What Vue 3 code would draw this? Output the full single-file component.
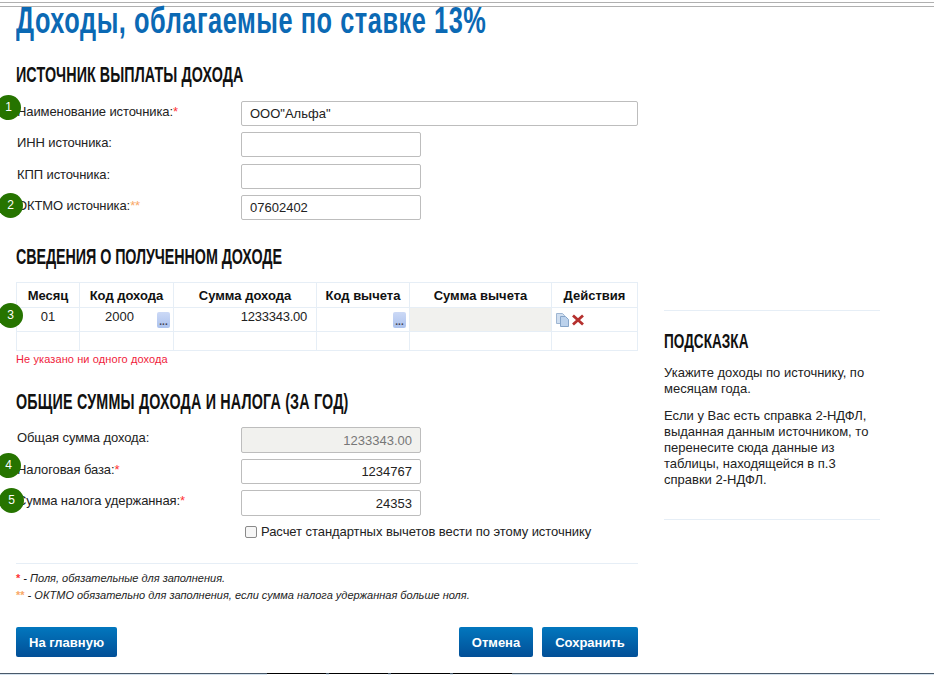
<script setup>
const sourceRows = [
  { label: 'Наименование источника:', mark: '*', value: 'ООО"Альфа"', wide: true, badge: '1', cls: 'b1', rowCls: 'r1' },
  { label: 'ИНН источника:', value: '', rowCls: 'r2' },
  { label: 'КПП источника:', value: '', rowCls: 'r3' },
  { label: 'ОКТМО источника:', mark: '**', markCls: 'orange', value: '07602402', badge: '2', cls: 'b2', rowCls: 'r4' }
]
const totals = [
  { label: 'Общая сумма дохода:', value: '1233343.00', disabled: true, rowCls: 't1' },
  { label: 'Налоговая база:', mark: '*', value: '1234767', badge: '4', cls: 'b4', rowCls: 't2' },
  { label: 'Сумма налога удержанная:', mark: '*', value: '24353', badge: '5', cls: 'b5', rowCls: 't3' }
]
</script>

<template>
  <div class="page">
    <div class="topbar"></div>
    <div class="columns">
      <main class="main">
        <h1>Доходы, облагаемые по ставке 13%</h1>

        <h2 class="first">ИСТОЧНИК ВЫПЛАТЫ ДОХОДА</h2>
        <div class="rows">
          <div v-for="r in sourceRows" :key="r.label" class="row" :class="r.rowCls">
            <span v-if="r.badge" class="badge" :class="r.cls">{{ r.badge }}</span>
            <label>{{ r.label }}<span v-if="r.mark" class="mark" :class="r.markCls">{{ r.mark }}</span></label>
            <input class="field" :class="{ wide: r.wide }" :value="r.value" />
          </div>
        </div>

        <h2 class="second">СВЕДЕНИЯ О ПОЛУЧЕННОМ ДОХОДЕ</h2>
        <div class="table-wrap">
          <span class="badge b3">3</span>
          <table>
            <colgroup>
              <col class="w1" /><col class="w2" /><col class="w3" />
              <col class="w4" /><col class="w5" /><col class="w6" />
            </colgroup>
            <thead>
              <tr><th>Месяц</th><th>Код дохода</th><th>Сумма дохода</th><th>Код вычета</th><th>Сумма вычета</th><th>Действия</th></tr>
            </thead>
            <tbody>
              <tr class="data">
                <td class="c">01</td>
                <td class="code">2000<span class="pick">...</span></td>
                <td class="r">1233343.00</td>
                <td class="code"><span class="pick">...</span></td>
                <td class="off"></td>
                <td>
                  <div class="acts">
                    <svg width="13" height="14" viewBox="0 0 13 14">
                      <path d="M0.5 0.5h6l2 2v8h-8z" fill="#cfdef0" stroke="#9fb6d2" />
                      <path d="M4.5 3.5h5l3 3v7h-8z" fill="#bcd2ec" stroke="#86a5c9" />
                    </svg>
                    <svg width="12" height="12" viewBox="0 0 12 12">
                      <path d="M1 1.5L11 10.5M11 1.5L1 10.5" stroke="#b5302e" stroke-width="2.8" />
                    </svg>
                  </div>
                </td>
              </tr>
              <tr class="empty"><td></td><td></td><td></td><td></td><td></td><td></td></tr>
            </tbody>
          </table>
        </div>
        <p class="error">Не указано ни одного дохода</p>

        <h2 class="third">ОБЩИЕ СУММЫ ДОХОДА И НАЛОГА (ЗА ГОД)</h2>
        <div class="rows">
          <div v-for="r in totals" :key="r.label" class="row" :class="r.rowCls">
            <span v-if="r.badge" class="badge" :class="r.cls">{{ r.badge }}</span>
            <label>{{ r.label }}<span v-if="r.mark" class="mark">{{ r.mark }}</span></label>
            <input class="field right" :class="{ disabled: r.disabled }" :value="r.value" />
          </div>
        </div>
        <div class="check">
          <span class="box"></span>
          <span>Расчет стандартных вычетов вести по этому источнику</span>
        </div>

        <div class="notes">
          <p><span class="mark">*</span> - Поля, обязательные для заполнения.</p>
          <p><span class="mark orange">**</span> - ОКТМО обязательно для заполнения, если сумма налога удержанная больше ноля.</p>
        </div>

        <div class="buttons">
          <button class="btn home">На главную</button>
          <div class="right-btns">
            <button class="btn cancel">Отмена</button>
            <button class="btn save">Сохранить</button>
          </div>
        </div>
      </main>

      <aside class="hint">
        <h3>ПОДСКАЗКА</h3>
        <p>Укажите доходы по источнику, по месяцам года.</p>
        <p>Если у Вас есть справка 2-НДФЛ, выданная данным источником, то перенесите сюда данные из таблицы, находящейся в п.3 справки 2-НДФЛ.</p>
      </aside>
    </div>
    <div class="bottombar"><span></span><span></span><span></span><span></span></div>
  </div>
</template>

<style>
html, body { margin: 0; background: #fff; overflow: hidden; }
</style>

<style scoped>
.page {
  position: relative;
  width: 934px;
  height: 675px;
  overflow: hidden;
  font-family: "Liberation Sans", Arial, sans-serif;
  font-size: 13px;
  color: #222;
  background: #fff;
}
.topbar {
  margin-top: 2px;
  height: 3px;
  border-top: 1px solid #b0b0b0;
  border-bottom: 1px solid #b0b0b0;
}
.bottombar {
  position: absolute;
  left: 0;
  right: 0;
  bottom: 0;
  height: 1px;
  display: flex;
  gap: 3px;
  padding-left: 267px;
  border-top: 1px solid #4a5a6a;
  background: #d5e3ef;
}
.bottombar span {
  width: 59px;
  height: 1px;
  margin-top: -1px;
  border-top: 1px solid #000;
  background: #fff;
}
.columns { display: flex; padding-left: 16px; }
.main { width: 622px; flex: none; }
h1, h2, h3 {
  margin: 0;
  font-family: "Liberation Sans", sans-serif;
  white-space: nowrap;
  transform-origin: 0 50%;
  font-weight: 700;
}
h1 {
  font-size: 36px;
  line-height: 36px;
  margin-top: -4px;
  color: #0b69b4;
  letter-spacing: 0.78px;
  transform: scaleX(0.704);
}
h2 {
  font-size: 22px;
  line-height: 24px;
  color: #111;
  transform: scaleX(0.65);
}
h2.first { margin-top: 24px; letter-spacing: 0.13px; }
h2.second { margin-top: 24px; letter-spacing: -0.1px; }
h2.third { margin-top: 24px; letter-spacing: 0.3px; }
.rows { display: flex; flex-direction: column; }
.row { position: relative; display: flex; align-items: flex-start; }
.first + .rows { margin-top: 14px; }
.r1 { height: 31px; }
.r2 { height: 32px; }
.r3 { height: 31px; }
.r4 { height: 26px; }
.t1 { height: 32px; }
.t2 { height: 31px; }
.t3 { height: 29px; }
.third + .rows { margin-top: 13px; }
label {
  width: 225px;
  flex: none;
  padding-left: 1px;
  box-sizing: border-box;
  font-size: 13px;
  line-height: 18px;
  margin-top: 2px;
  letter-spacing: -0.1px;
  color: #222;
}
.mark { color: #f33; }
.mark.orange { color: #f9a868; }
.field {
  width: 180px;
  height: 25px;
  box-sizing: border-box;
  border: 1px solid #bdbdbd;
  border-radius: 2px;
  padding: 0 8px;
  font: 13px "Liberation Sans", Arial, sans-serif;
  color: #222;
  background: #fff;
  outline: none;
}
.field.wide { width: 397px; }
.field.right { text-align: right; }
.field.disabled { background: #f1f1ee; color: #777; }
.t1 .field, .t3 .field { height: 26px; }
.badge {
  position: absolute;
  width: 25px;
  height: 25px;
  border-radius: 50%;
  background: #267400;
  color: #fff;
  font-size: 12px;
  line-height: 24px;
  text-align: center;
  z-index: 2;
}
.b1 { left: -20px; top: -6px; }
.b2 { left: -18px; top: -2px; }
.b3 { left: -18px; top: 21px; }
.b4 { left: -20px; top: -6px; }
.b5 { left: -17px; top: -2px; }
.table-wrap { position: relative; margin-top: 13px; }
table {
  width: 621px;
  table-layout: fixed;
  border-collapse: collapse;
  font-size: 13px;
}
.w1 { width: 63px; }
.w2 { width: 94px; }
.w3 { width: 143px; }
.w4 { width: 93px; }
.w5 { width: 142px; }
.w6 { width: 86px; }
th, td { border: 1px solid #e6eef6; padding: 0; }
th { height: 24px; font-weight: 700; color: #111; text-align: center; }
.data td { height: 23px; }
.empty td { height: 18px; }
.c, .r, .code { vertical-align: top; line-height: 17px; }
.c { text-align: center; }
.r { text-align: right; padding-right: 9px; letter-spacing: -0.25px; }
.code { position: relative; text-align: center; padding-right: 14px; }
.pick {
  position: absolute;
  right: 3px;
  top: 4px;
  width: 13px;
  height: 16px;
  border-radius: 2px;
  background: linear-gradient(#ccd9f6, #abc2ee);
  color: #445;
  font-size: 10px;
  font-weight: 700;
  line-height: 19px;
  text-align: center;
}
.off { background: #f1f1ee; }
.acts {
  display: flex;
  align-items: center;
  gap: 3px;
  height: 23px;
  padding-left: 4px;
}
.error {
  margin: 2px 0 0;
  font-size: 11px;
  line-height: 13px;
  letter-spacing: 0.1px;
  color: #f01c3c;
}
.check {
  display: flex;
  align-items: center;
  margin-left: 229px;
  margin-top: 4px;
  line-height: 18px;
  font-size: 13px;
  letter-spacing: -0.06px;
  color: #222;
  gap: 4px;
}
.box {
  width: 12px;
  height: 12px;
  box-sizing: border-box;
  border: 1px solid #8a8a8a;
  border-radius: 2px;
  background: #f6f6f6;
}
.notes {
  margin-top: 22px;
  border-top: 1px solid #e6eef6;
  padding-top: 8px;
  font-size: 11px;
  font-style: italic;
  color: #222;
}
.notes p { margin: 0 0 4px; line-height: 13px; }
.notes .mark { font-style: normal; font-weight: 700; }
.buttons {
  display: flex;
  justify-content: space-between;
  margin-top: 25px;
}
.right-btns { display: flex; gap: 9px; }
.btn {
  height: 30px;
  border: none;
  border-radius: 2px;
  background: linear-gradient(#0277be, #024f97);
  color: #fff;
  font: 700 13px "Liberation Sans", Arial, sans-serif;
  padding: 0;
}
.home { width: 101px; }
.cancel { width: 74px; }
.save { width: 96px; }
.hint {
  width: 216px;
  height: 210px;
  margin: 303px 0 0 26px;
  box-sizing: border-box;
  flex: none;
  border-top: 1px solid #e6eef6;
  border-bottom: 1px solid #e6eef6;
  padding-top: 18px;
  font-size: 13px;
  line-height: 16px;
  color: #222;
}
.hint h3 {
  font-size: 20px;
  line-height: 24px;
  color: #111;
  margin-bottom: 12px;
  transform: scaleX(0.68);
}
.hint p { margin: 0 0 11px; }
</style>
